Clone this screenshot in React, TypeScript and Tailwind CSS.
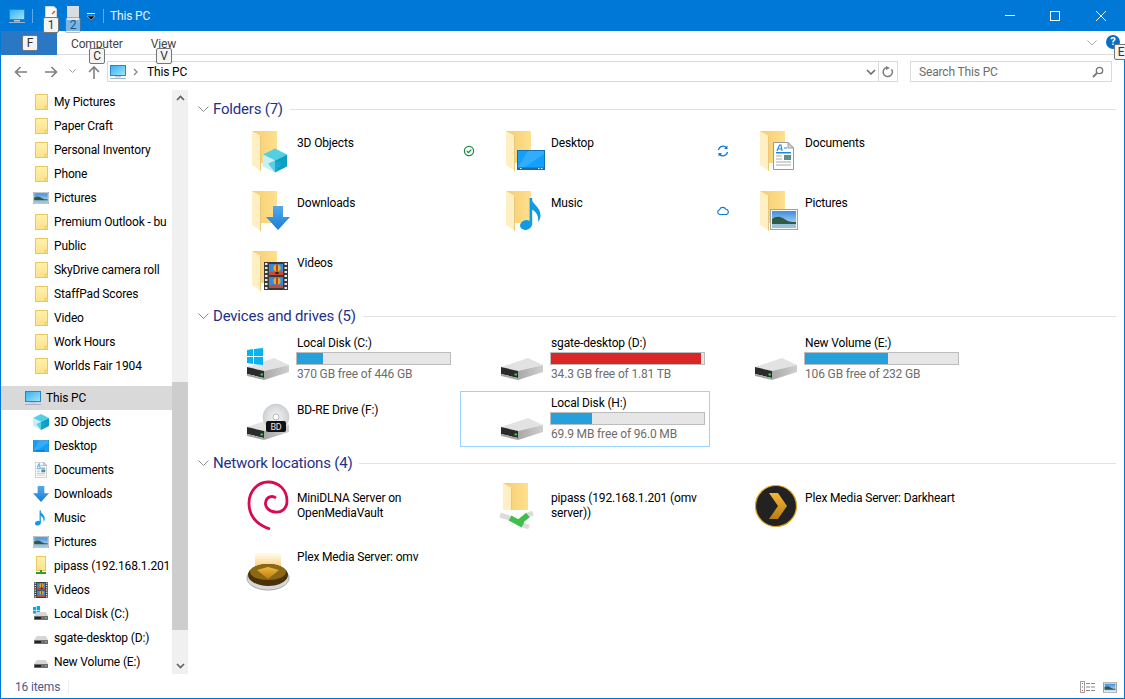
import type { ReactNode } from "react";

const font = "font-['Roboto','Liberation_Sans',sans-serif]";

type BoxProps = { x?: number; y?: number; w?: number; h?: number };

const Cube = ({ x, y, w = 16, h = 16 }: BoxProps) => (
  <svg x={x} y={y} width={w} height={h} viewBox="0 0 24 24">
    <polygon points="12,0 24,6 12,12 0,6" fill="#52d0e2" />
    <polygon points="0,6 12,12 12,24 0,18" fill="#c6f0f4" />
    <polygon points="12,12 24,6 24,18 12,24" fill="#0b9fc6" />
    <polygon points="5,15 12,12 19,15 12,24" fill="#19b4d6" opacity="0.6" />
  </svg>
);

const DownArrow = ({ x, y, w = 16, h = 16 }: BoxProps) => (
  <svg x={x} y={y} width={w} height={h} viewBox="0 0 24 24">
    <path d="M7 0H17V11H24L12 24L0 11H7Z" fill="url(#arrowGrad)" />
  </svg>
);

const Film = ({ x, y, w = 14, h = 16 }: BoxProps) => (
  <svg x={x} y={y} width={w} height={h} viewBox="0 0 24 28">
    <rect width="24" height="28" fill="#3a3a3a" />
    {[1, 5, 9, 13, 17, 21, 25].map((t) => (
      <g key={t}>
        <rect x="1" y={t} width="2.5" height="2" fill="#e8e8e8" />
        <rect x="20.5" y={t} width="2.5" height="2" fill="#e8e8e8" />
      </g>
    ))}
    <rect x="5" y="2" width="14" height="11" fill="#3f86d8" />
    <rect x="5" y="15" width="14" height="11" fill="#3f86d8" />
    <rect x="5" y="10" width="14" height="3" fill="#c84b3a" />
    <rect x="5" y="23" width="14" height="3" fill="#c84b3a" />
    <circle cx="13" cy="6" r="3.6" fill="#e2b021" />
    <circle cx="13" cy="19" r="3.6" fill="#e2b021" />
    <path d="M13 2.5V9.5" stroke="#b6281f" strokeWidth="1.6" />
    <path d="M13 15.5V22.5" stroke="#b6281f" strokeWidth="1.6" />
    <rect x="11.5" y="10" width="3" height="2" fill="#222" />
  </svg>
);

const DesktopGlyph = ({ x, y, w = 16, h = 12 }: BoxProps) => (
  <svg x={x} y={y} width={w} height={h} viewBox="0 0 28 20">
    <rect x="0.5" y="0.5" width="27" height="19" fill="#12a0fa" stroke="#0a70b8" />
    <polygon points="1,17 11,1 27,1 27,4 8,17" fill="#4cb8fb" opacity="0.55" />
    <rect x="1" y="17.5" width="26" height="2" fill="#0a70b8" />
    <rect x="3" y="18" width="1.5" height="1" fill="#fff" />
    <rect x="21" y="18" width="1.5" height="1" fill="#fff" />
    <rect x="24" y="18" width="1.5" height="1" fill="#fff" />
  </svg>
);

const Note = ({ x, y, w = 10, h = 16 }: BoxProps) => (
  <svg x={x} y={y} width={w} height={h} viewBox="0 0 21 32">
    <ellipse cx="6" cy="27" rx="6" ry="4.8" fill="#0f9ae6" transform="rotate(-14 6 27)" />
    <rect x="9.6" y="0" width="2.6" height="27" fill="#0f9ae6" />
    <path d="M11 0C12 6 21 9 20.5 18C20.3 21 19 23 18 24C19 19 17 14 11 11Z" fill="#0f9ae6" />
  </svg>
);

const Doc = ({ x, y, w = 12, h = 16 }: BoxProps) => (
  <svg x={x} y={y} width={w} height={h} viewBox="0 0 21 28">
    <path d="M0.5 0.5H15L20.5 6V27.5H0.5Z" fill="#fff" stroke="#9a9a9a" />
    <path d="M15 0.5V6H20.5Z" fill="#d8d8d8" stroke="#9a9a9a" />
    <path d="M4 9L6.5 3H8L9 9M5 7H8.5" stroke="#1e88e5" strokeWidth="1.2" fill="none" />
    <path d="M11 6H14" stroke="#1e88e5" />
    <rect x="3" y="10" width="15" height="1.5" fill="#1e88e5" />
    <path d="M3 14H9M3 17H9M3 20H18M3 23H18" stroke="#a8a8a8" />
    <rect x="11" y="13" width="7" height="5" fill="#5f8d8a" />
  </svg>
);

const Photo = ({ x, y, w = 16, h = 12 }: BoxProps) => (
  <svg x={x} y={y} width={w} height={h} viewBox="0 0 28 21">
    <rect x="0.5" y="0.5" width="27" height="20" fill="#fff" stroke="#a3a3a3" strokeWidth="1.2" />
    <rect x="2" y="2" width="24" height="17" fill="url(#skyGrad)" />
    <path d="M2 10C7 6 12 8 16 11C19 13 23 13 26 13V15H2Z" fill="#2f5a45" />
    <rect x="2" y="15" width="24" height="4" fill="#9cc0d6" />
  </svg>
);

const Screen = ({ size = 16 }: { size?: number }) => (
  <svg width={size} height={size} viewBox="0 0 16 16">
    <rect x="0.5" y="1.5" width="15" height="10" fill="url(#screenGrad)" stroke="#2a86cc" />
    <rect x="5" y="12" width="6" height="1.5" fill="#b9cbda" />
    <rect x="0" y="14" width="16" height="1" fill="#9fb4c6" />
  </svg>
);

const SmallFolder = () => (
  <svg width="16" height="16" viewBox="0 0 16 16">
    <rect x="2.5" y="0.5" width="12" height="15" fill="url(#smallFolderGrad)" stroke="#e9c95c" />
    <path d="M12 15.5V12H14.5" fill="none" stroke="#e9c95c" />
  </svg>
);

const SmallPipass = () => (
  <svg width="16" height="16" viewBox="0 0 16 16" className="overflow-visible">
    <rect x="3.5" y="-1.5" width="9" height="14" fill="url(#smallFolderGrad)" stroke="#e9c95c" />
    <rect x="7" y="12" width="2" height="2" fill="#2e9e33" />
    <rect x="3" y="14" width="10" height="2" fill="#2e9e33" />
  </svg>
);

const SmallDisk = ({ win }: { win?: boolean }) => (
  <svg width="16" height="16" viewBox="0 0 16 16" className="overflow-visible">
    {win && (
      <g fill="#0ea5ea">
        <rect x="0" y="1" width="3" height="3" />
        <rect x="3.6" y="0" width="3.4" height="4" />
        <rect x="0" y="4.6" width="3" height="3" />
        <rect x="3.6" y="4.6" width="3.4" height="3.4" />
      </g>
    )}
    <polygon points="1,10 4,6 13,6 15,10" fill="#d6d6d6" />
    <rect x="1" y="10" width="14" height="4" fill="#6f6f6f" />
    <rect x="2" y="11" width="6" height="2" fill="#222" />
    <rect x="12" y="11" width="1.5" height="1.5" fill="#3fd04a" />
  </svg>
);

const glyph = (node: ReactNode) => (
  <svg width="16" height="16" viewBox="0 0 16 16">
    {node}
  </svg>
);

const FolderShape = ({ x = 0, y = 0 }: { x?: number; y?: number }) => (
  <g transform={`translate(${x} ${y})`}>
    <rect x="0" y="4" width="25" height="32" fill="url(#folderGrad)" />
    <polygon points="0,4 9,9 9,44 0,38" fill="#fff0c4" />
    <polygon points="9,9 9,44 8,43.5 8,8.5" fill="#e9c87a" />
  </g>
);

const Drive = () => (
  <g>
    <polygon points="-5,36 22,27 37,34 12,40" fill="#e2e2e2" />
    <polygon points="12,40 37,34 37,41 12,49" fill="url(#driveGrad)" />
    <polygon points="-5,36 12,40 12,47 -5,43" fill="#2a2a2a" />
    <polygon points="-5,43 12,47 12,49 -5,45" fill="#a4a4a4" />
    <rect x="8.5" y="42.5" width="2.5" height="2" fill="#35d043" />
  </g>
);

const folderIcon = (overlay: ReactNode) => (
  <>
    <FolderShape />
    {overlay}
  </>
);

const pcSmall = <Screen />;

type NavItem = { label: string; icon: ReactNode; root?: boolean };

const navItems: NavItem[] = [
  { label: "My Pictures", icon: <SmallFolder /> },
  { label: "Paper Craft", icon: <SmallFolder /> },
  { label: "Personal Inventory", icon: <SmallFolder /> },
  { label: "Phone", icon: <SmallFolder /> },
  { label: "Pictures", icon: glyph(<Photo y={2} />) },
  { label: "Premium Outlook - bu", icon: <SmallFolder /> },
  { label: "Public", icon: <SmallFolder /> },
  { label: "SkyDrive camera roll", icon: <SmallFolder /> },
  { label: "StaffPad Scores", icon: <SmallFolder /> },
  { label: "Video", icon: <SmallFolder /> },
  { label: "Work Hours", icon: <SmallFolder /> },
  { label: "Worlds Fair 1904", icon: <SmallFolder /> },
];

const pcItems: NavItem[] = [
  { label: "3D Objects", icon: glyph(<Cube />) },
  { label: "Desktop", icon: glyph(<DesktopGlyph y={2} />) },
  { label: "Documents", icon: glyph(<Doc x={2} />) },
  { label: "Downloads", icon: glyph(<DownArrow />) },
  { label: "Music", icon: glyph(<Note x={2} />) },
  { label: "Pictures", icon: glyph(<Photo y={2} />) },
  { label: "pipass (192.168.1.201 (omv server))", icon: <SmallPipass /> },
  { label: "Videos", icon: glyph(<Film x={1} />) },
  { label: "Local Disk (C:)", icon: <SmallDisk win /> },
  { label: "sgate-desktop (D:)", icon: <SmallDisk /> },
  { label: "New Volume (E:)", icon: <SmallDisk /> },
];

const NavRow = ({ item }: { item: NavItem }) => (
  <div className="flex h-6 items-center gap-[5px] pl-[32px] text-black">
    <span className="shrink-0">{item.icon}</span>
    <span className="whitespace-nowrap">{item.label}</span>
  </div>
);

const KeyTip = ({ label, className }: { label: string; className: string }) => (
  <div
    className={`absolute z-10 flex h-4 w-4 items-center justify-center rounded-[2px] border border-[#767676] bg-[#f4f4f4] text-[12px] text-[#333] ${className}`}
  >
    {label}
  </div>
);

const Tile = ({
  icon,
  status,
  selected,
  children,
  top = "pt-[9px]",
}: {
  icon: ReactNode;
  status?: ReactNode;
  selected?: boolean;
  children: ReactNode;
  top?: string;
}) => (
  <div className={`flex h-[56px] w-[250px] ${selected ? "outline outline-1 -outline-offset-1 outline-[#99d1ff]" : ""}`}>
    <div className="flex w-[46px] shrink-0 items-start pl-[1px] pt-[17px]">{status}</div>
    <svg width="45" height="56" viewBox="0 0 45 56" className="shrink-0 overflow-visible">
      {icon}
    </svg>
    <div className={`w-[158px] leading-[15px] text-black ${top}`}>{children}</div>
  </div>
);

const DriveTile = ({
  icon,
  name,
  free,
  pct,
  color = "bg-[#26a0da]",
  selected,
}: {
  icon: ReactNode;
  name: string;
  free: string;
  pct: number;
  color?: string;
  selected?: boolean;
}) => (
  <Tile icon={icon} selected={selected} top="pt-[4px]">
    <div className="h-4 leading-4">{name}</div>
    <div className="-ml-px mt-px h-[13px] w-[155px] border border-[#bcbcbc] bg-[#e6e6e6]">
      <div className={`h-full ${color}`} style={{ width: `${pct}%` }} />
    </div>
    <div className="mt-px h-4 leading-4 text-[#6d6d6d]">{free}</div>
  </Tile>
);

const SectionHeader = ({ title, className }: { title: string; className: string }) => (
  <div className={`flex h-[21px] items-center pl-[9px] pr-[8px] ${className}`}>
    <svg width="11" height="7" viewBox="0 0 11 7" className="mr-[4px] shrink-0">
      <path d="M0.5 0.5L5.5 5.5L10.5 0.5" fill="none" stroke="#8a8a8a" />
    </svg>
    <span className="whitespace-nowrap text-[15px] tracking-[-0.2px] text-[#1e3287]">{title}</span>
    <div className="ml-[7px] h-px flex-1 bg-[#e2e2e2]" />
  </div>
);

const Status = ({ children }: { children: ReactNode }) => (
  <svg width="14" height="14" viewBox="0 0 14 14" className="ml-[1px]">
    {children}
  </svg>
);

export default function App() {
  return (
    <div className={`${font} relative flex h-[699px] w-[1125px] flex-col overflow-hidden bg-white text-[12px] tracking-[-0.15px]`}>
      <svg className="absolute h-0 w-0">
        <defs>
          <linearGradient id="arrowGrad" x1="0" y1="0" x2="0" y2="1">
            <stop offset="0" stopColor="#54a9ec" />
            <stop offset="1" stopColor="#1b7bd4" />
          </linearGradient>
          <linearGradient id="skyGrad" x1="0" y1="0" x2="0" y2="1">
            <stop offset="0" stopColor="#3d8fe0" />
            <stop offset="1" stopColor="#cfe6f5" />
          </linearGradient>
          <linearGradient id="screenGrad" x1="0" y1="0" x2="1" y2="1">
            <stop offset="0" stopColor="#2fb0f3" />
            <stop offset="1" stopColor="#a8e4fb" />
          </linearGradient>
          <linearGradient id="smallFolderGrad" x1="0" y1="0" x2="0" y2="1">
            <stop offset="0" stopColor="#fff2ae" />
            <stop offset="1" stopColor="#fde18a" />
          </linearGradient>
          <linearGradient id="folderGrad" x1="0" y1="0" x2="1" y2="0">
            <stop offset="0" stopColor="#f5cc6c" />
            <stop offset="1" stopColor="#ffe08f" />
          </linearGradient>
          <linearGradient id="driveGrad" x1="0" y1="0" x2="1" y2="0">
            <stop offset="0" stopColor="#a8a8a8" />
            <stop offset="1" stopColor="#cfcfcf" />
          </linearGradient>
          <radialGradient id="discGrad">
            <stop offset="0" stopColor="#f4f4f4" />
            <stop offset="1" stopColor="#cfd3d6" />
          </radialGradient>
          <linearGradient id="plexGold" x1="0" y1="0" x2="0" y2="1">
            <stop offset="0" stopColor="#f4b73a" />
            <stop offset="1" stopColor="#b97c12" />
          </linearGradient>
          <linearGradient id="glowGrad" x1="0" y1="0" x2="0" y2="1">
            <stop offset="0" stopColor="#ffe3a0" stopOpacity="0.2" />
            <stop offset="1" stopColor="#fbb53b" />
          </linearGradient>
        </defs>
      </svg>

      {/* title bar */}
      <div className="relative flex h-[31px] shrink-0 items-center bg-[#0078d7] pl-[9px] text-white">
        <Screen />
        <div className="ml-[7px] h-[14px] w-px bg-[#5ea9e5]" />
        <svg width="14" height="14" viewBox="0 0 14 14" className="ml-[11px] -mt-[6px]">
          <path d="M1.5 0.5H10L12.5 3V13.5H1.5Z" fill="#fff" stroke="#cfd8e0" />
          <path d="M8 8L11 5" stroke="#d9552b" strokeWidth="1.5" />
        </svg>
        <svg width="14" height="14" viewBox="0 0 14 14" className="ml-[8px] -mt-[6px]">
          <rect x="1" y="0" width="12" height="14" fill="#d8dde2" />
        </svg>
        <svg width="8" height="7" viewBox="0 0 8 7" className="ml-[7px] mt-[2px]">
          <rect width="8" height="1" fill="#fff" />
          <path d="M0 3H8L4 7Z" fill="#111" stroke="#fff" strokeWidth="0.4" />
        </svg>
        <div className="ml-[8px] h-[14px] w-px bg-[#5ea9e5]" />
        <span className="ml-[6px] text-[#e9f3fb]">This PC</span>
        <div className="ml-auto flex items-center pr-[19px]">
          <div className="mr-[35px] h-px w-[10px] bg-white" />
          <div className="mr-[36px] h-[10px] w-[10px] border border-white" />
          <svg width="10" height="10" viewBox="0 0 10 10">
            <path d="M0 0L10 10M10 0L0 10" stroke="#fff" />
          </svg>
        </div>
        <KeyTip label="1" className="left-[43px] top-[17px]" />
        <KeyTip label="2" className="left-[65px] top-[17px] opacity-50" />
      </div>

      {/* ribbon tabs */}
      <div className="relative flex h-[24px] shrink-0 items-stretch border-l border-[#0078d7]">
        <div className="w-[56px] bg-[#2a78c4]" />
        <div className="flex flex-1 items-center border-b border-[#dadbdc] pt-[3px] text-[#444]">
          <span className="ml-[14px]">Computer</span>
          <span className="ml-[28px]">View</span>
          <svg width="10" height="6" viewBox="0 0 10 6" className="ml-auto mb-[3px] mr-[28px]">
            <path d="M0.5 0.5L5 5L9.5 0.5" fill="none" stroke="#a8a8a8" />
          </svg>
        </div>
        <div className="absolute left-[1105px] top-[4px] flex h-[14px] w-[14px] items-center justify-center rounded-full bg-[#0a6cc4] text-[11px] font-bold text-white">
          ?
        </div>
        <KeyTip label="F" className="left-[21px] top-[4px]" />
        <KeyTip label="C" className="left-[88px] top-[17px]" />
        <KeyTip label="V" className="left-[155px] top-[17px]" />
        <KeyTip label="E" className="left-[1113px] top-[13px] w-[14px]" />
      </div>

      <div className="flex min-h-0 flex-1 flex-col border-b border-l border-r border-[#0078d7]">
        {/* address row */}
        <div className="flex h-[35px] shrink-0 items-start pt-[6px]">
          <div className="flex h-[21px] items-center pl-[13px] text-[#7a7a7a]">
            <svg width="14" height="12" viewBox="0 0 14 12">
              <path d="M13 6H2M6.5 1L1.5 6L6.5 11" fill="none" stroke="#808080" strokeWidth="1.6" />
            </svg>
            <svg width="14" height="12" viewBox="0 0 14 12" className="ml-[16px]">
              <path d="M1 6H12M7.5 1L12.5 6L7.5 11" fill="none" stroke="#808080" strokeWidth="1.6" />
            </svg>
            <svg width="7" height="5" viewBox="0 0 7 5" className="ml-[11px]">
              <path d="M0.5 0.5L3.5 3.5L6.5 0.5" fill="none" stroke="#a0a0a0" />
            </svg>
            <svg width="12" height="14" viewBox="0 0 12 14" className="ml-[12px]">
              <path d="M6 14V2M1 7L6 2L11 7" fill="none" stroke="#808080" strokeWidth="1.6" />
            </svg>
          </div>
          <div className="ml-[7px] flex h-[21px] w-[791px] items-center border border-[#d9d9d9] pl-[2px] text-black">
            <Screen />
            <svg width="5" height="8" viewBox="0 0 5 8" className="ml-[7px]">
              <path d="M1 1L4 4L1 7" fill="none" stroke="#808080" strokeWidth="1.2" />
            </svg>
            <span className="ml-[9px]">This PC</span>
            <svg width="10" height="6" viewBox="0 0 10 6" className="ml-auto">
              <path d="M1 1L5 5L9 1" fill="none" stroke="#666" strokeWidth="1.5" />
            </svg>
            <div className="ml-[2px] h-full w-px bg-[#d9d9d9]" />
            <svg width="12" height="12" viewBox="0 0 12 12" className="mx-[3px]">
              <path d="M9.5 3.2A4.6 4.6 0 1 1 5 1.4" fill="none" stroke="#808080" strokeWidth="1.5" />
              <path d="M4 0V4L8 2Z" fill="#808080" />
            </svg>
          </div>
          <div className="ml-[12px] flex h-[21px] w-[202px] items-center justify-between border border-[#d9d9d9] pl-[8px] pr-[7px] text-[#6d6d6d]">
            <span>Search This PC</span>
            <svg width="12" height="12" viewBox="0 0 12 12">
              <circle cx="7.5" cy="4.5" r="3.2" fill="none" stroke="#777" strokeWidth="1.3" />
              <path d="M5 7L1 11" stroke="#777" strokeWidth="1.8" />
            </svg>
          </div>
        </div>

        {/* body */}
        <div className="flex min-h-0 flex-1">
          <div className="flex w-[188px] shrink-0">
            <div className="w-[171px] overflow-hidden">
              {navItems.map((item) => (
                <NavRow key={item.label} item={item} />
              ))}
              <div className="mt-[8px] flex h-6 items-center gap-[5px] bg-[#d9d9d9] pl-[24px] text-black">
                {pcSmall}
                <span>This PC</span>
              </div>
              {pcItems.map((item) => (
                <NavRow key={item.label} item={item} />
              ))}
            </div>
            <div className="flex h-[584px] w-[16px] shrink-0 flex-col bg-[#f0f0f0]">
              <div className="flex h-[16px] items-center justify-center">
                <svg width="9" height="6" viewBox="0 0 9 6">
                  <path d="M1 5L4.5 1.5L8 5" fill="none" stroke="#606060" strokeWidth="1.6" />
                </svg>
              </div>
              <div className="mt-[276px] h-[248px] bg-[#cdcdcd]" />
              <div className="mt-auto flex h-[16px] items-center justify-center">
                <svg width="9" height="6" viewBox="0 0 9 6">
                  <path d="M1 1L4.5 4.5L8 1" fill="none" stroke="#606060" strokeWidth="1.6" />
                </svg>
              </div>
            </div>
          </div>

          <div className="min-w-0 flex-1 pt-[9px]">
            <SectionHeader title="Folders (7)" className="mt-0" />
            <div className="ml-[17px] mt-[7px] grid grid-cols-[repeat(3,250px)] gap-x-1 gap-y-1">
              <Tile icon={folderIcon(<Cube x={11} y={21} w={24} h={25} />)}>3D Objects</Tile>
              <Tile
                icon={folderIcon(<DesktopGlyph x={11} y={23} w={28} h={20} />)}
                status={
                  <Status>
                    <circle cx="7" cy="7" r="4.6" fill="none" stroke="#188a3e" strokeWidth="1.2" />
                    <path d="M4.8 7L6.5 8.7L9.3 5.6" fill="none" stroke="#188a3e" strokeWidth="1.2" />
                  </Status>
                }
              >
                Desktop
              </Tile>
              <Tile
                icon={folderIcon(<Doc x={13} y={15} w={21} h={28} />)}
                status={
                  <Status>
                    <path d="M2.5 6A4.6 4.6 0 0 1 10.5 3.8M11.5 8A4.6 4.6 0 0 1 3.5 10.2" fill="none" stroke="#0a78d7" strokeWidth="1.3" />
                    <path d="M11.5 1.5V5H8ZM2.5 12.5V9H6Z" fill="#0a78d7" />
                  </Status>
                }
              >
                Documents
              </Tile>
              <Tile icon={folderIcon(<DownArrow x={14} y={19} w={24} h={24} />)}>Downloads</Tile>
              <Tile icon={folderIcon(<Note x={14} y={11} w={21} h={32} />)}>Music</Tile>
              <Tile
                icon={folderIcon(<Photo x={10} y={22} w={28} h={21} />)}
                status={
                  <Status>
                    <path d="M3.8 10.5A2.4 2.4 0 0 1 3.5 5.8A3.4 3.4 0 0 1 9.8 5.2A2.7 2.7 0 0 1 10.3 10.5Z" fill="none" stroke="#0a78d7" strokeWidth="1.1" />
                  </Status>
                }
              >
                Pictures
              </Tile>
              <Tile icon={folderIcon(<Film x={12} y={15} w={24} h={28} />)}>Videos</Tile>
            </div>

            <SectionHeader title="Devices and drives (5)" className="mt-[3px]" />
            <div className="ml-[17px] mt-[4px] grid grid-cols-[repeat(3,250px)] gap-x-1 gap-y-1">
              <DriveTile
                name="Local Disk (C:)"
                free="370 GB free of 446 GB"
                pct={17}
                icon={
                  <>
                    <Drive />
                    <g fill="#06b4f0">
                      <polygon points="-5,19 1,18 1,25 -5,25" />
                      <polygon points="2,18 11,17 11,25 2,25" />
                      <polygon points="-5,26 1,26 1,33 -5,32" />
                      <polygon points="2,26 11,26 11,34 2,33" />
                    </g>
                  </>
                }
              />
              <DriveTile
                name="sgate-desktop (D:)"
                free="34.3 GB free of 1.81 TB"
                pct={98}
                color="bg-[#da2626]"
                icon={<Drive />}
              />
              <DriveTile name="New Volume (E:)" free="106 GB free of 232 GB" pct={54} icon={<Drive />} />
              <Tile
                top="pt-[11px]"
                icon={
                  <>
                    <Drive />
                    <circle cx="24" cy="26" r="13" fill="url(#discGrad)" stroke="#c0c4c8" strokeWidth="0.5" />
                    <circle cx="24" cy="26" r="3" fill="#fff" stroke="#b8bcc0" />
                    <rect x="14" y="30" width="20" height="11" rx="2" fill="#111" />
                    <text x="24" y="39" textAnchor="middle" fontSize="9" fill="#e8e8e8">
                      BD
                    </text>
                  </>
                }
              >
                <div className="h-4 leading-4">BD-RE Drive (F:)</div>
              </Tile>
              <DriveTile
                name="Local Disk (H:)"
                free="69.9 MB free of 96.0 MB"
                pct={27}
                selected
                icon={<Drive />}
              />
            </div>

            <SectionHeader title="Network locations (4)" className="mt-[6px]" />
            <div className="ml-[17px] mt-[7px] grid grid-cols-[repeat(3,250px)] gap-x-1 gap-y-1">
              <Tile
                top="pt-[10px]"
                icon={
                  <path
                    d="M18 48C6 44 -3 36 -3 22C-3 10 6 1 16 1C27 1 35 9 35 20C35 28 29 32 23 31C16 30 12 25 14 20C15 16 20 14 24 17"
                    fill="none"
                    stroke="#d70a53"
                    strokeWidth="2.8"
                  />
                }
              >
                MiniDLNA Server on OpenMediaVault
              </Tile>
              <Tile
                top="pt-[10px]"
                icon={
                  <>
                    <FolderShape x={-3} y={-2} />
                    <rect x="-4" y="29" width="30" height="18" fill="#fff" />
                    <path d="M-6 34L4 37M22 34L27 32M17 44L23 46" fill="none" stroke="#dcdcdc" strokeWidth="5" />
                    <path d="M4 37L17 44M12 42L22 34" fill="none" stroke="#3fbf4a" strokeWidth="5.5" />
                  </>
                }
              >
                pipass (192.168.1.201 (omv server))
              </Tile>
              <Tile
                top="pt-[10px]"
                icon={
                  <>
                    <circle cx="16" cy="25" r="20.5" fill="#222" stroke="#e0a526" strokeWidth="1.2" />
                    <path d="M9 12H18L27 25L18 38H9L18 25Z" fill="url(#plexGold)" />
                  </>
                }
              >
                Plex Media Server: Darkheart
              </Tile>
              <Tile
                icon={
                  <>
                    <rect x="3" y="12" width="26" height="18" fill="url(#glowGrad)" />
                    <ellipse cx="16" cy="37" rx="21" ry="12" fill="#d8d8d8" stroke="#a8a8a8" />
                    <ellipse cx="16" cy="34" rx="20" ry="11" fill="#4a3208" />
                    <ellipse cx="16" cy="31" rx="18" ry="8" fill="#8c6714" />
                    <path d="M5 29L16 26L27 29L16 38Z" fill="url(#plexGold)" />
                  </>
                }
              >
                Plex Media Server: omv
              </Tile>
            </div>
          </div>
        </div>

        {/* status bar */}
        <div className="flex h-[24px] shrink-0 items-center pt-[2px] text-[#4a5a8c]">
          <span className="ml-[14px]">16 items</span>
          <div className="ml-[8px] h-[14px] w-px bg-[#eeeeee]" />
          <svg width="16" height="12" viewBox="0 0 16 12" className="ml-auto">
            <rect x="0.5" y="0.5" width="4" height="11" fill="#fff" stroke="#a0a0a0" />
            <rect x="2" y="2" width="1" height="1" fill="#666" />
            <rect x="2" y="5.5" width="1" height="1" fill="#666" />
            <rect x="2" y="9" width="1" height="1" fill="#c04040" />
            <path d="M6 2.5H10M11 2.5H15M6 6H10M11 6H15M6 9.5H10M11 9.5H15" stroke="#8a8a8a" />
          </svg>
          <div className="ml-[7px] mr-[7px]">
            <svg width="14" height="11" viewBox="0 0 28 21" className="block">
              <rect x="1" y="1" width="26" height="19" fill="#fff" stroke="#a3a3a3" strokeWidth="2" />
              <rect x="3" y="3" width="22" height="15" fill="url(#skyGrad)" />
              <path d="M3 10C8 7 12 8 16 11C19 13 23 13 25 13V15H3Z" fill="#2f5a45" />
            </svg>
          </div>
        </div>
      </div>
    </div>
  );
}
